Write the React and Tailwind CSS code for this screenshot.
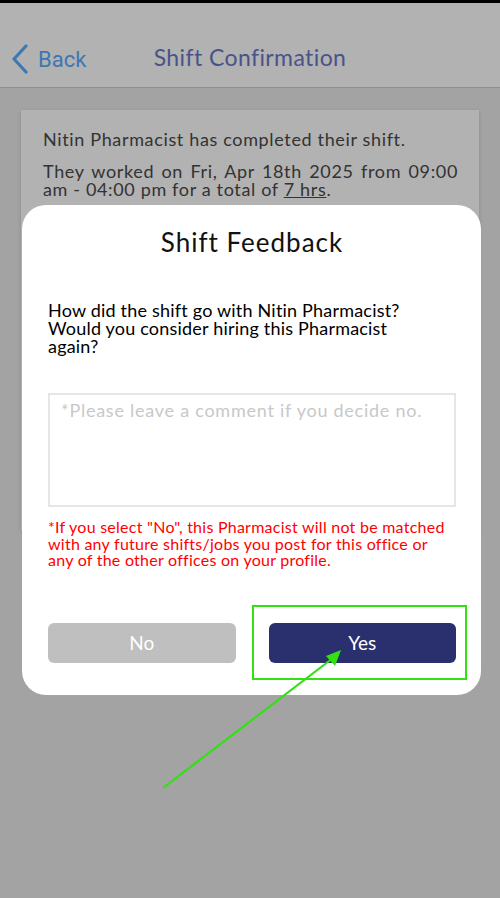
const sans = { fontFamily: 'Lato, "Noto Sans", sans-serif' };

function Header() {
  return (
    <header className="bg-white border-b border-[#cdcdcd]">
      <div className="h-[3px] bg-black" />
      <div className="relative h-[84px] flex items-center pt-[28px]">
        <button className="flex items-center pl-[11px] gap-[9px] text-[#5aabff]">
          <svg width="18" height="30" viewBox="0 0 18 30" fill="none">
            <polyline points="15,2 3,15 15,28" stroke="currentColor" strokeWidth="3.2" strokeLinecap="round" strokeLinejoin="round" />
          </svg>
          <span className="text-[22px]" style={{ fontFamily: 'Roboto, sans-serif' }}>Back</span>
        </button>
        <h1 className="absolute inset-x-0 bottom-[13px] text-center text-[23px] tracking-[0.4px] text-[#6b78c4] pointer-events-none">
          Shift Confirmation
        </h1>
      </div>
    </header>
  );
}

function SummaryCard() {
  return (
    <div className="mx-[21px] mt-[22px] bg-white shadow-[0_1px_4px_rgba(0,0,0,0.15)] pl-[22px] pr-[21px] pt-[20px] pb-[24px] h-[420px] text-[18px] tracking-[0.65px] text-[#4a4a4a] leading-[18px]">
      <p>Nitin Pharmacist has completed their shift.</p>
      <p className="mt-[14px] text-justify">
        They worked on Fri, Apr 18th 2025 from 09:00 am - 04:00 pm for a total of <span className="underline">7 hrs</span>.
      </p>
    </div>
  );
}

function FeedbackModal() {
  return (
    <div className="absolute left-[22px] right-[19px] top-[205px] h-[490px] bg-white rounded-[24px] pl-[26px] pr-[25px] pt-[22px] flex flex-col">
      <h2 className="text-center text-[26px] tracking-[1px] leading-[30px] text-[#111]">Shift Feedback</h2>
      <p className="mt-[44px] text-[18px] tracking-[0.2px] leading-[18px] text-black">
        How did the shift go with Nitin Pharmacist?<br />
        Would you consider hiring this Pharmacist<br />
        again?
      </p>
      <textarea
        placeholder="*Please leave a comment if you decide no."
        className="mt-[38px] h-[114px] w-full shrink-0 resize-none border-2 border-[#e6e6e6] px-[11px] py-[2px] text-[18px] tracking-[0.75px] placeholder:text-[#c8c8c8] outline-none"
        style={sans}
      />
      <p className="mt-[12px] text-[16px] tracking-[0.25px] leading-[16.5px] text-[#ff0000]">
        *If you select "No", this Pharmacist will not be matched with any future shifts/jobs you post for this office or any of the other offices on your profile.
      </p>
      <div className="mt-auto mb-[32px] flex gap-[33px]">
        <button className="flex-1 h-[40px] rounded-[6px] bg-[#bfbfbf] text-white text-[19px]">No</button>
        <button className="flex-1 h-[40px] rounded-[6px] bg-[#2a306e] text-white text-[19px]">Yes</button>
      </div>
    </div>
  );
}

export default function App() {
  return (
    <div className="relative w-[500px] h-[898px] overflow-hidden bg-[#eaeaea]" style={sans}>
      <Header />
      <SummaryCard />

      {/* dim overlay */}
      <div className="absolute inset-0 bg-black/30" />

      <FeedbackModal />

      {/* annotation */}
      <div className="absolute left-[252px] top-[605px] w-[215px] h-[75px] border-2 border-[#33e014]" />
      <svg className="absolute inset-0 pointer-events-none" width="500" height="898">
        <line x1="163" y1="788" x2="333" y2="658" stroke="#33e014" strokeWidth="2.2" />
        <polygon points="341,650 326,656 335,666" fill="#33e014" />
      </svg>
    </div>
  );
}
